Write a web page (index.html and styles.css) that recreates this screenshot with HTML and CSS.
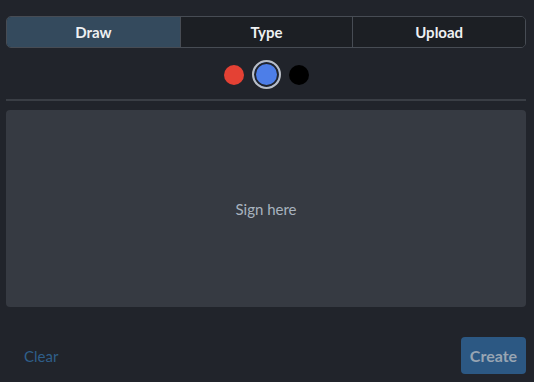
FILE: index.html
```html
<!DOCTYPE html>
<html lang="en">
<head>
  <meta charset="UTF-8" />
  <title>Signature</title>
  <link rel="stylesheet" href="styles.css">
</head>
<body>
  <div class="sig-panel">
    <div class="mode-tabs">
      <button class="mode-tab active">Draw</button>
      <button class="mode-tab">Type</button>
      <button class="mode-tab">Upload</button>
    </div>
    <div class="swatches">
      <span class="swatch red"></span>
      <span class="swatch blue selected"></span>
      <span class="swatch black"></span>
    </div>
    <hr class="divider">
    <div class="sign-pad">Sign here</div>
    <div class="sig-actions">
      <button class="btn-clear">Clear</button>
      <button class="btn-create">Create</button>
    </div>
  </div>
</body>
</html>
```

FILE: styles.css
```css
body { margin: 0; background: #21242b; font-family: Lato, "Open Sans", sans-serif; color: #e4e7eb; }
.sig-panel { padding: 16px 8px 8px 6px; }
.mode-tabs { display: grid; grid-template-columns: repeat(3, 1fr); border: 1px solid #474c54; border-radius: 5px; overflow: hidden; height: 32px; box-sizing: border-box; }
.mode-tab { background: #1c1f24; border: 0; border-left: 1px solid #474c54; color: #eef0f2; font-family: inherit; font-weight: 700; font-size: 15px; padding: 0; }
.mode-tab:first-child { border-left: 0; }
.mode-tab.active { background: #344a5d; }
.swatches { display: flex; justify-content: center; align-items: center; gap: 8px; margin-top: 12px; height: 29px; }
.swatch { width: 20px; height: 20px; border-radius: 50%; display: block; box-sizing: border-box; }
.swatch.red { background: #e44134; }
.swatch.blue { background: #4d7ee8; }
.swatch.black { background: #000; }
.swatch.selected { width: 29px; height: 29px; border: 2px solid #b9bec6; box-shadow: inset 0 0 0 2px #21242b; }
.divider { border: 0; border-top: 2px solid #3a3e45; margin: 10px 0 9px; }
.sign-pad { height: 197px; background: #363a42; border-radius: 4px; display: flex; align-items: center; justify-content: center; color: #a8b3bf; font-size: 15px; }
.sig-actions { display: flex; justify-content: space-between; align-items: center; margin-top: 30px; }
.btn-clear { background: none; border: 0; color: #2f5f8a; font-family: inherit; font-size: 15px; padding: 0 0 0 18px; margin-top: 1px; }
.btn-create { background: #2c5883; border: 0; border-radius: 4px; color: #98a5b3; font-family: inherit; font-weight: 700; font-size: 16px; width: 65px; height: 37px; padding: 0; }
```
